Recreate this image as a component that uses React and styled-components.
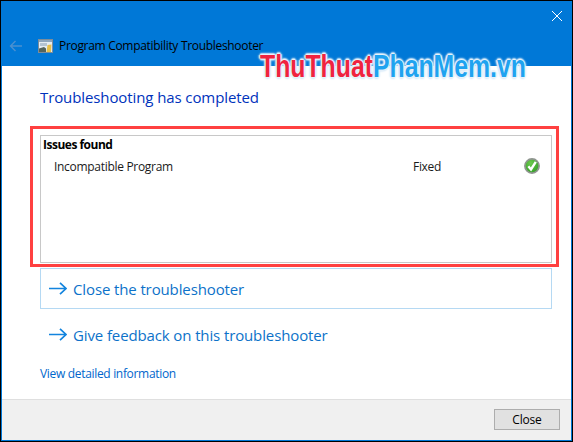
import styled, { createGlobalStyle } from "styled-components";

const GlobalStyle = createGlobalStyle`
  html, body {
    margin: 0;
    padding: 0;
    background: #000;
  }
  body {
    font-family: "Open Sans", "Noto Sans", sans-serif;
  }
`;

function BackIcon() {
  return (
    <svg width="14" height="12" viewBox="0 0 14 12" fill="none" stroke="#4a90d0" strokeWidth="1.4">
      <path d="M13 6H1.5M6.5 1 1.5 6l5 5" />
    </svg>
  );
}

function CloseIcon() {
  return (
    <svg width="10" height="10" viewBox="0 0 10 10" stroke="#fff" strokeWidth="1">
      <path d="M0 0 10 10M10 0 0 10" />
    </svg>
  );
}

function ProgramIcon() {
  return (
    <svg width="15" height="14" viewBox="0 0 15 14">
      <rect x="0.5" y="0.5" width="14" height="13" fill="#e4ecf2" stroke="#7d8d9a" />
      <rect x="1" y="1" width="13" height="2" fill="#8ea6bc" />
      <rect x="2" y="4" width="7" height="3" fill="#b4c4d2" />
      <path d="M1 13V9.5L6 8 8 9.5V13Z" fill="#55655c" />
      <path d="M8.5 13 9.5 6 13.5 5.5 13 13Z" fill="#e6c04a" />
    </svg>
  );
}

function ArrowIcon() {
  return (
    <svg width="18" height="13" viewBox="0 0 18 13" fill="none" stroke="#1384de" strokeWidth="1.7">
      <path d="M0 6.5H16.5M11 .8 17 6.5 11 12.2" />
    </svg>
  );
}

function CheckIcon() {
  return (
    <svg width="16" height="16" viewBox="0 0 16 16">
      <defs>
        <radialGradient id="ok" cx="0.4" cy="0.3" r="0.8">
          <stop offset="0" stopColor="#6cc84e" />
          <stop offset="1" stopColor="#2c9a22" />
        </radialGradient>
      </defs>
      <circle cx="8" cy="8" r="7.1" fill="url(#ok)" stroke="#8f958f" strokeWidth="1.7" />
      <path d="M4.4 8.2 7 11.4 11.8 3.8" fill="none" stroke="#fff" strokeWidth="2.4" />
    </svg>
  );
}

export default function App() {
  return (
    <>
      <GlobalStyle />
      <Screen>
        <Window>
          <TitleBar>
            <CloseRow>
              <CloseIcon />
            </CloseRow>
            <TitleRow>
              <BackIcon />
              <ProgramIcon />
              <TitleText>Program Compatibility Troubleshooter</TitleText>
            </TitleRow>
          </TitleBar>

          <Content>
            <Heading>Troubleshooting has completed</Heading>
            <IssuesBox>
              <IssuesTitle>Issues found</IssuesTitle>
              <IssueRow>
                <IssueName>Incompatible Program</IssueName>
                <IssueStatus>Fixed</IssueStatus>
                <CheckIcon />
              </IssueRow>
            </IssuesBox>
            <CommandLink $boxed>
              <ArrowIcon />
              Close the troubleshooter
            </CommandLink>
            <CommandLink>
              <ArrowIcon />
              Give feedback on this troubleshooter
            </CommandLink>
            <DetailLink>View detailed information</DetailLink>
          </Content>

          <Footer>
            <FooterButton>Close</FooterButton>
          </Footer>

          <Highlight />
          <Watermark>
            <WatermarkRed>ThuThuat</WatermarkRed>
            <WatermarkBlue>PhanMem.vn</WatermarkBlue>
          </Watermark>
        </Window>
      </Screen>
    </>
  );
}

const Screen = styled.div`
  width: 573px;
  height: 442px;
  padding: 1px 0 0 1px;
  box-sizing: border-box;
  background: #000;
  overflow: hidden;
`;

const Window = styled.div`
  position: relative;
  width: 571px;
  height: 440px;
  box-sizing: border-box;
  border: 1px solid #0078d7;
  display: flex;
  flex-direction: column;
  background: #fff;
`;

const TitleBar = styled.div`
  height: 64px;
  flex: none;
  background: #0078d7;
  display: flex;
  flex-direction: column;
`;

const CloseRow = styled.div`
  height: 30px;
  padding: 9px 9px 0 0;
  box-sizing: border-box;
  display: flex;
  justify-content: flex-end;
`;

const TitleRow = styled.div`
  display: flex;
  align-items: center;
  padding: 6px 0 0 7px;
  svg:first-child {
    margin-right: 15px;
  }
`;

const TitleText = styled.span`
  margin-left: 6px;
  font-size: 12px;
  line-height: 16px;
  letter-spacing: -0.31px;
  color: #000;
  white-space: nowrap;
`;

const Content = styled.div`
  flex: 1;
  padding: 0 19px 0 38px;
  display: flex;
  flex-direction: column;
`;

const Heading = styled.h1`
  margin: 20px 0 0;
  font-size: 15px;
  line-height: 22px;
  letter-spacing: -0.1px;
  font-weight: 400;
  color: #0033bc;
  white-space: nowrap;
`;

const IssuesBox = styled.div`
  margin-top: 27px;
  height: 128px;
  box-sizing: border-box;
  border: 1px solid #c8c8c8;
  padding: 1px 2px;
`;

const IssuesTitle = styled.div`
  font-size: 12px;
  line-height: 16px;
  letter-spacing: -0.5px;
  font-weight: 700;
  color: #000;
`;

const IssueRow = styled.div`
  display: flex;
  align-items: center;
  height: 16px;
  margin-top: 5px;
  padding: 0 9px 0 11px;
`;

const IssueName = styled.span`
  width: 359px;
  font-size: 12px;
  letter-spacing: -0.3px;
  color: #1a1a1a;
`;

const IssueStatus = styled.span`
  flex: 1;
  font-size: 12px;
  letter-spacing: -0.3px;
  color: #1a1a1a;
`;

const CommandLink = styled.div`
  display: flex;
  align-items: center;
  gap: 6px;
  height: 41px;
  box-sizing: border-box;
  margin-top: 5px;
  padding-left: 8px;
  border: 1px solid ${({ $boxed }) => ($boxed ? "#b5d9f3" : "transparent")};
  font-size: 15px;
  letter-spacing: -0.12px;
  color: #0d72c9;
  white-space: nowrap;
`;

const DetailLink = styled.a`
  margin-top: 11px;
  font-size: 12px;
  line-height: 16px;
  letter-spacing: -0.32px;
  color: #0066cc;
`;

const Footer = styled.div`
  height: 41px;
  flex: none;
  box-sizing: border-box;
  border-top: 1px solid #dfdfdf;
  background: #f0f0f0;
  display: flex;
  align-items: center;
  justify-content: flex-end;
  padding: 0 11px 0 0;
`;

const FooterButton = styled.button`
  width: 66px;
  height: 21px;
  box-sizing: border-box;
  margin-top: -1px;
  padding: 0;
  border: 1px solid #adadad;
  background: #e1e1e1;
  font: inherit;
  font-size: 12px;
  letter-spacing: -0.2px;
  color: #000;
`;

const Highlight = styled.div`
  position: absolute;
  left: 28px;
  top: 124px;
  width: 529px;
  height: 141px;
  box-sizing: border-box;
  border: 3px solid #ff4040;
  pointer-events: none;
`;

const Watermark = styled.div`
  position: absolute;
  left: 258px;
  top: 48px;
  font-family: "Liberation Sans", Arial, sans-serif;
  font-size: 31px;
  line-height: 34px;
  font-weight: 700;
  white-space: nowrap;
  transform: scaleX(0.8);
  transform-origin: left center;
  text-shadow: 1px 0 1px #eaf4fb, -1px 0 1px #eaf4fb, 0 1px 1px #eaf4fb, 0 -1px 1px #eaf4fb,
    2px 0 2px #d5e9f8, -2px 0 2px #d5e9f8, 0 2px 2px #d5e9f8, 0 -2px 2px #d5e9f8;
`;

const WatermarkRed = styled.span`
  color: #f0233f;
`;

const WatermarkBlue = styled.span`
  color: #1fa3f0;
`;
